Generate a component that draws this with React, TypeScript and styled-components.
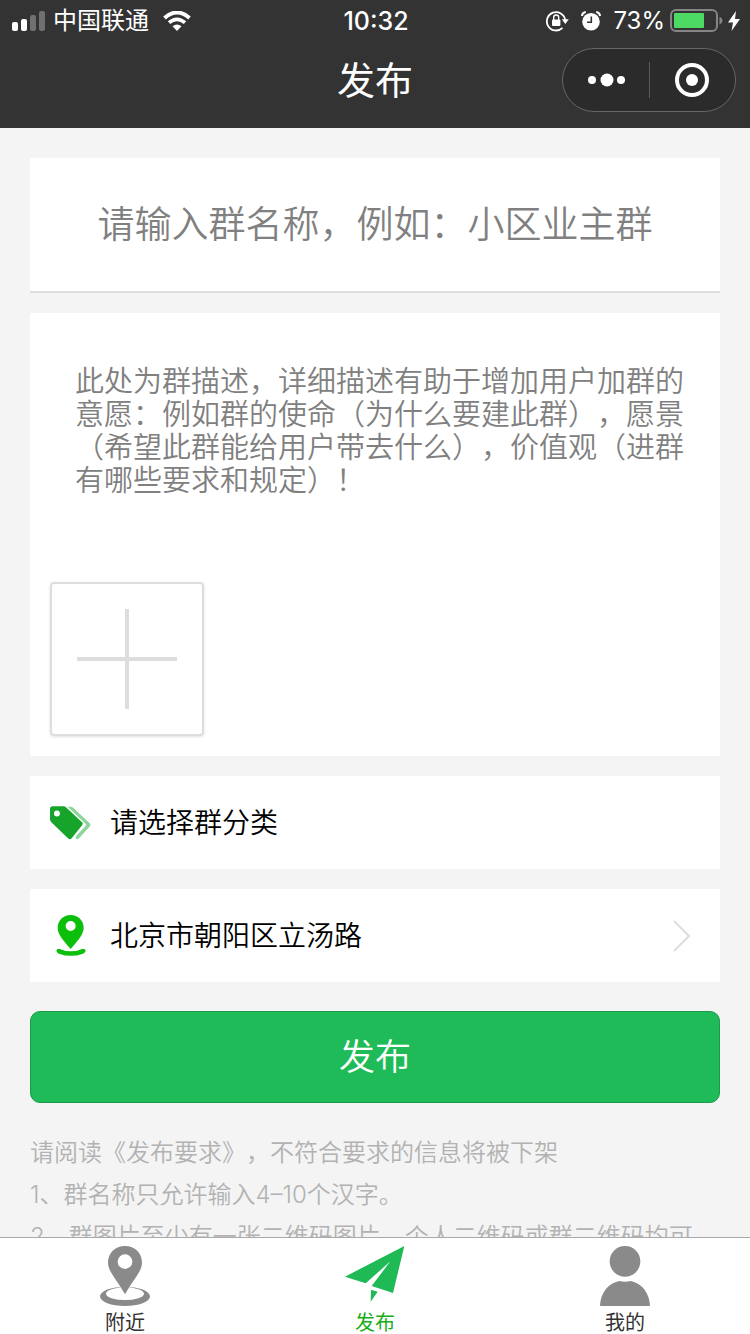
import React, { useState } from "react";
import styled, { createGlobalStyle } from "styled-components";

const GlobalStyle = createGlobalStyle`
  *, *::before, *::after { box-sizing: border-box; }
  body {
    margin: 0;
    background: #f4f4f4;
    font-family: Inter, "Noto Sans CJK SC", sans-serif;
    line-height: 40px;
    text-spacing-trim: space-all;
  }
  button, input, textarea, select {
    font: inherit;
    color: inherit;
    margin: 0;
    padding: 0;
    border: 0;
    border-radius: 0;
    background: none;
    outline: none;
  }
  button { cursor: pointer; }
  svg { display: block; flex: none; }
`;

const Screen = styled.div`
  display: flex;
  flex-direction: column;
  height: 100vh;
`;

const Header = styled.header`
  flex: none;
  background: #333;
  color: #fff;
`;

const StatusBar = styled.div`
  display: grid;
  grid-template-columns: 1fr auto 1fr;
  align-items: center;
  height: 40px;
  padding: 2px 10px 0 12px;
  font-size: 24px;
  line-height: 36px;
`;

const StatusGroup = styled.div<{ $end?: boolean; $gap: number }>`
  display: flex;
  align-items: center;
  justify-content: ${(p) => (p.$end ? "flex-end" : "flex-start")};
  gap: ${(p) => p.$gap}px;
`;

const Clock = styled.time`
  font-size: 25px;
  font-weight: 500;
`;

const NavBar = styled.div`
  display: grid;
  grid-template-columns: 1fr auto 1fr;
  align-items: center;
  height: 88px;
  padding: 0 14px 8px;
`;

const Title = styled.h1`
  grid-column: 2;
  margin: 0;
  font-size: 38px;
  font-weight: 400;
  line-height: 56px;
`;

const Capsule = styled.div`
  justify-self: end;
  display: flex;
  align-items: center;
  width: 174px;
  height: 64px;
  border: 1px solid #666;
  border-radius: 32px;
  background: #2b2b2b;
`;

const CapsuleButton = styled.button`
  flex: 1;
  display: flex;
  align-items: center;
  justify-content: center;
  height: 36px;
  & + & { border-left: 1px solid #5a5a5a; }
`;

const Content = styled.main`
  flex: 1;
  min-height: 0;
  overflow-y: auto;
  scrollbar-width: none;
  padding: 30px 30px 0;
`;

const Form = styled.form`
  display: flex;
  flex-direction: column;
  gap: 20px;
`;

const NameInput = styled.input`
  width: 100%;
  height: 135px;
  background: #fff;
  border-bottom: 2px solid #ddd;
  font-size: 37px;
  font-weight: 350;
  text-align: center;
  &::placeholder { color: #808080; opacity: 1; }
`;

const DetailCard = styled.section`
  background: #fff;
  padding-bottom: 20px;
`;

const DetailInput = styled.textarea`
  display: block;
  width: 100%;
  height: 269px;
  padding: 52px 36px 0 45px;
  resize: none;
  font-size: 29px;
  font-weight: 350;
  line-height: 33px;
  &::placeholder { color: #808080; opacity: 1; }
`;

const UploadButton = styled.button`
  display: flex;
  align-items: center;
  justify-content: center;
  width: 154px;
  height: 154px;
  margin-left: 20px;
  border: 2px solid #ddd;
  border-radius: 4px;
  box-shadow: 0 1px 3px rgba(0, 0, 0, 0.12);
`;

const Row = styled.div`
  display: flex;
  align-items: center;
  height: 93px;
  padding: 0 28px 0 20px;
  background: #fff;
  font-size: 28px;
  font-weight: 350;
`;

const RowIcon = styled.label`
  display: flex;
  flex: none;
  justify-content: center;
  width: 41px;
  margin-right: 19px;
`;

const RowSelect = styled.select`
  flex: 1;
  height: 100%;
  appearance: none;
  color: #000;
`;

const RowButton = styled.button`
  flex: 1;
  display: flex;
  align-items: center;
  justify-content: space-between;
  height: 100%;
  color: #000;
`;

const SubmitButton = styled.button`
  height: 92px;
  margin-top: 9px;
  border: 1px solid #1c9a4a;
  border-radius: 10px;
  background: #1fbb58;
  color: #fff;
  font-size: 36px;
  font-weight: 350;
`;

const Hints = styled.section`
  margin-top: 29px;
  color: #b2b2b2;
  font-size: 24px;
  font-weight: 350;
  line-height: 42px;
  p { margin: 0; }
`;

const TabBar = styled.nav`
  flex: none;
  display: grid;
  grid-template-columns: repeat(3, 1fr);
  height: 97px;
  border-top: 1px solid #aaa;
  background: #fff;
`;

const Tab = styled.a<{ $active?: boolean }>`
  display: flex;
  flex-direction: column;
  align-items: center;
  gap: 3px;
  padding-top: 8px;
  color: ${(p) => (p.$active ? "#1aad19" : "#333")};
  font-size: 20px;
  font-weight: 400;
  line-height: 28px;
  text-decoration: none;
`;

const SignalIcon = () => (
  <svg width="34" height="22" viewBox="0 0 34 22" fill="#fff">
    <rect x="0" y="12" width="6" height="9" rx="2" />
    <rect x="9" y="9" width="6" height="12" rx="2" />
    <rect x="18" y="5" width="6" height="16" rx="2" fill="#707070" />
    <rect x="27" y="1" width="6" height="20" rx="2" fill="#707070" />
  </svg>
);

const WifiIcon = () => (
  <svg width="28" height="20" viewBox="0 0 28 20">
    <path d="M1.500 6.900Q14 -3.900 26.500 6.900" fill="none" stroke="#fff" strokeWidth="4" />
    <path d="M6 11.700Q14 5 22 11.700" fill="none" stroke="#fff" strokeWidth="3.600" />
    <path d="M9.500 15.300Q14 11.500 18.500 15.300L14 20Z" fill="#fff" />
  </svg>
);

const RotationLockIcon = () => (
  <svg width="23" height="22" viewBox="0 0 23 22">
    <path d="M16.500 17.900A9.200 9.200 0 1 1 19.200 10" fill="none" stroke="#fff" strokeWidth="1.800" />
    <path d="M15.800 9.300H22.800L19.300 14Z" fill="#fff" />
    <rect x="6" y="9.500" width="8.400" height="6.500" rx="1" fill="#fff" />
    <path d="M7.700 10V7.500a2.500 2.500 0 0 1 5 0V10" fill="none" stroke="#fff" strokeWidth="1.400" />
  </svg>
);

const AlarmIcon = () => (
  <svg width="20" height="20" viewBox="0 0 20 20">
    <circle cx="10" cy="10.800" r="8.800" fill="#fff" />
    <path d="M10.300 5.500V11.300H6" fill="none" stroke="#333" strokeWidth="1.600" />
    <path d="M.8 5A5 5 0 0 1 4.800 1M19.200 5A5 5 0 0 0 15.200 1" fill="none" stroke="#fff" strokeWidth="2" />
  </svg>
);

const BatteryIcon = () => (
  <svg width="53" height="24" viewBox="0 0 53 24">
    <rect x="1" y="1" width="46" height="21" rx="5" fill="none" stroke="#858585" strokeWidth="2" />
    <rect x="4" y="4" width="30" height="15" rx="1" fill="#4cd964" />
    <path d="M49.500 8Q52.500 9 52.500 11.500T49.500 15.500Z" fill="#858585" />
  </svg>
);

const BoltIcon = () => (
  <svg width="12" height="20" viewBox="0 0 12 20">
    <path d="M8 0L0 11.500H5L3.500 20L12 8H7Z" fill="#fff" />
  </svg>
);

const MoreIcon = () => (
  <svg width="38" height="14" viewBox="0 0 38 14" fill="#fff">
    <circle cx="5" cy="7" r="4" />
    <circle cx="20" cy="7" r="6.500" />
    <circle cx="34" cy="7" r="4" />
  </svg>
);

const TargetIcon = () => (
  <svg width="34" height="34" viewBox="0 0 34 34">
    <circle cx="17" cy="17" r="15" fill="none" stroke="#fff" strokeWidth="4" />
    <circle cx="17" cy="17" r="6" fill="#fff" />
  </svg>
);

const PlusIcon = () => (
  <svg width="100" height="100" viewBox="0 0 100 100">
    <path d="M50 0V100M0 50H100" stroke="#ddd" strokeWidth="4" />
  </svg>
);

const TagIcon = () => (
  <svg width="41" height="34" viewBox="0 0 124 101">
    <path
      d="M53 1H62Q67 1 71 5L121 52Q124 56 121 60L87 97Q83 101 79 98Q75 94 79 90L107 60Q110 56 107 52Z"
      fill="#8ed49c"
    />
    <path
      fillRule="evenodd"
      d="M8 0H40Q46 0 50 4L97 48Q101 52 97 57L65 97Q60 102 55 97L4 48Q0 44 0 39V8Q0 0 8 0ZM21 13A9 9 0 1 0 21 31A9 9 0 1 0 21 13Z"
      fill="#17a42b"
    />
  </svg>
);

const PlaceIcon = () => (
  <svg width="30" height="41" viewBox="0 0 88 123" fill="#0bbf0b">
    <path
      fillRule="evenodd"
      d="M43 0C66 0 82 17 82 39C82 60 58 84 43 102C28 84 4 60 4 39C4 17 20 0 43 0ZM43 18A15 15 0 1 0 43 48A15 15 0 1 0 43 18Z"
    />
    <path d="M8 101Q1 101 0 107Q1 113 8 116Q43 129 80 116Q87 113 88 107Q87 101 80 101Q43 117 8 101Z" />
  </svg>
);

const ChevronIcon = () => (
  <svg width="20" height="32" viewBox="0 0 20 32">
    <path d="M2 1L17 16L2 31" fill="none" stroke="#ddd" strokeWidth="2" />
  </svg>
);

const NearbyIcon = () => (
  <svg width="50" height="60" viewBox="0 0 150 180">
    <path
      fillRule="evenodd"
      d="M75 122A75 29 0 1 0 75 180A75 29 0 1 0 75 122ZM75 124A57 19 0 1 1 75 162A57 19 0 1 1 75 124Z"
      fill="#8a8a8a"
    />
    <path d="M35 75L75 155L115 75Z" fill="#fff" />
    <path
      fillRule="evenodd"
      d="M75 0C105 0 126 22 126 50C126 76 100 100 75 145C50 100 24 76 24 50C24 22 45 0 75 0ZM75 25A22 22 0 1 0 75 69A22 22 0 1 0 75 25Z"
      fill="#8a8a8a"
    />
  </svg>
);

const PlaneIcon = () => (
  <svg width="60" height="60" viewBox="0 0 180 180" fill="#1fb956">
    <path d="M178 0L144 141L80 120L136 46L62 112L0 92Z" />
    <path d="M78 131L98 137L77 167Z" />
  </svg>
);

const ProfileIcon = () => (
  <svg width="50" height="60" viewBox="0 0 150 180" fill="#8a8a8a">
    <circle cx="75" cy="46" r="46" />
    <path d="M0 180C1 142 24 112 58 105Q75 109 92 105C126 112 149 142 150 180Z" />
  </svg>
);

const categories = ["业主群", "兴趣群", "行业群"];

export default function App() {
  const [category, setCategory] = useState("");

  return (
    <Screen lang="zh-CN">
      <GlobalStyle />
      <Header>
        <StatusBar>
          <StatusGroup $gap={14}>
            <StatusGroup $gap={7}>
              <SignalIcon />
              <span>中国联通</span>
            </StatusGroup>
            <WifiIcon />
          </StatusGroup>
          <Clock>10:32</Clock>
          <StatusGroup $end $gap={5}>
            <StatusGroup $gap={12}>
              <RotationLockIcon />
              <AlarmIcon />
              <span>73%</span>
            </StatusGroup>
            <BatteryIcon />
            <BoltIcon />
          </StatusGroup>
        </StatusBar>
        <NavBar>
          <Title>发布</Title>
          <Capsule>
            <CapsuleButton aria-label="更多">
              <MoreIcon />
            </CapsuleButton>
            <CapsuleButton aria-label="关闭">
              <TargetIcon />
            </CapsuleButton>
          </Capsule>
        </NavBar>
      </Header>

      <Content>
        <Form onSubmit={(e) => e.preventDefault()}>
          <NameInput aria-label="群名称" placeholder="请输入群名称，例如：小区业主群" />
          <DetailCard>
            <DetailInput
              aria-label="群描述"
              placeholder="此处为群描述，详细描述有助于增加用户加群的意愿：例如群的使命（为什么要建此群），愿景（希望此群能给用户带去什么），价值观（进群有哪些要求和规定）！"
            />
            <UploadButton type="button" aria-label="添加图片">
              <PlusIcon />
            </UploadButton>
          </DetailCard>
          <Row>
            <RowIcon htmlFor="category" aria-label="群分类">
              <TagIcon />
            </RowIcon>
            <RowSelect id="category" value={category} onChange={(e) => setCategory(e.target.value)}>
              <option value="">请选择群分类</option>
              {categories.map((name) => (
                <option key={name}>{name}</option>
              ))}
            </RowSelect>
          </Row>
          <Row>
            <RowIcon htmlFor="place" aria-label="位置">
              <PlaceIcon />
            </RowIcon>
            <RowButton id="place" type="button">
              <span>北京市朝阳区立汤路</span>
              <ChevronIcon />
            </RowButton>
          </Row>
          <SubmitButton type="submit">发布</SubmitButton>
        </Form>
        <Hints>
          <p>请阅读《发布要求》，不符合要求的信息将被下架</p>
          <p>1、群名称只允许输入4–10个汉字。</p>
          <p>2、群图片至少有一张二维码图片，个人二维码或群二维码均可</p>
        </Hints>
      </Content>

      <TabBar>
        <Tab href="#nearby">
          <NearbyIcon />
          附近
        </Tab>
        <Tab href="#publish" $active>
          <PlaneIcon />
          发布
        </Tab>
        <Tab href="#mine">
          <ProfileIcon />
          我的
        </Tab>
      </TabBar>
    </Screen>
  );
}
